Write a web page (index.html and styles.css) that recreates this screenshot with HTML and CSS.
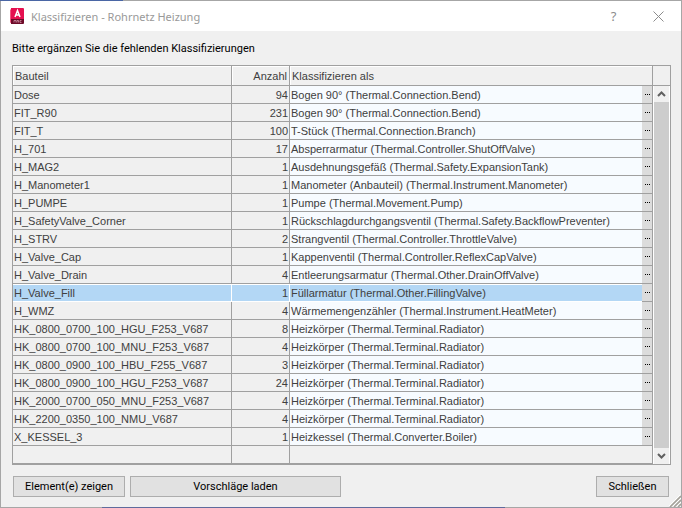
FILE: index.html
```html
<!DOCTYPE html>
<html lang="de">
<head>
  <meta charset="UTF-8" />
  <meta name="viewport" content="width=device-width, initial-scale=1.0"/>
  <title>Klassifizieren - Rohrnetz Heizung</title>
  <link rel="stylesheet" href="styles.css">
</head>
<body>
  <div class="dialog">
    <header class="titlebar">
      <svg class="app-icon" width="16" height="16" viewBox="0 0 16 16">
        <path d="M0 2 L2 0 V14 L0 15 Z" fill="#f0557f"/>
        <path d="M1 0 H13 Q14 0 14 1 V11 H1 Z" fill="#e51050"/>
        <path d="M1 11 H14 V15 Q14 16 13 16 H1 Z" fill="#6d0a28"/>
        <path d="M5 9 L7.5 2.5 L10 9 M5.8 7 H9.2" fill="none" stroke="#fff" stroke-width="1.5"/>
        <path d="M4 14.5 V12.5 H6 V14.5 M7 14.5 V12.5 H8.5 V14.5 M11.5 12.5 H10 V14.5 H11.5" fill="none" stroke="#d9a5b4" stroke-width="0.7"/>
      </svg>
      <h1>Klassifizieren - Rohrnetz Heizung</h1>
      <button class="title-btn" aria-label="Hilfe">?</button>
      <button class="title-btn" aria-label="Schließen">
        <svg width="11" height="11" viewBox="0 0 11 11"><path d="M0.5 0.5 L10.5 10.5 M10.5 0.5 L0.5 10.5" stroke="#8c8c8c" fill="none"/></svg>
      </button>
    </header>

    <main class="content">
      <p class="hint">Bitte ergänzen Sie die fehlenden Klassifizierungen</p>

      <div class="grid">
        <table>
          <thead>
            <tr><th class="part">Bauteil</th><th class="count">Anzahl</th><th class="class" colspan="2">Klassifizieren als</th></tr>
          </thead>
          <tbody>
            <tr><td>Dose</td><td>94</td><td>Bogen 90° (Thermal.Connection.Bend)</td><td><button aria-label="Auswählen"></button></td></tr>
            <tr><td>FIT_R90</td><td>231</td><td>Bogen 90° (Thermal.Connection.Bend)</td><td><button aria-label="Auswählen"></button></td></tr>
            <tr><td>FIT_T</td><td>100</td><td>T-Stück (Thermal.Connection.Branch)</td><td><button aria-label="Auswählen"></button></td></tr>
            <tr><td>H_701</td><td>17</td><td>Absperrarmatur (Thermal.Controller.ShutOffValve)</td><td><button aria-label="Auswählen"></button></td></tr>
            <tr><td>H_MAG2</td><td>1</td><td>Ausdehnungsgefäß (Thermal.Safety.ExpansionTank)</td><td><button aria-label="Auswählen"></button></td></tr>
            <tr><td>H_Manometer1</td><td>1</td><td>Manometer (Anbauteil) (Thermal.Instrument.Manometer)</td><td><button aria-label="Auswählen"></button></td></tr>
            <tr><td>H_PUMPE</td><td>1</td><td>Pumpe (Thermal.Movement.Pump)</td><td><button aria-label="Auswählen"></button></td></tr>
            <tr><td>H_SafetyValve_Corner</td><td>1</td><td>Rückschlagdurchgangsventil (Thermal.Safety.BackflowPreventer)</td><td><button aria-label="Auswählen"></button></td></tr>
            <tr><td>H_STRV</td><td>2</td><td>Strangventil (Thermal.Controller.ThrottleValve)</td><td><button aria-label="Auswählen"></button></td></tr>
            <tr><td>H_Valve_Cap</td><td>1</td><td>Kappenventil (Thermal.Controller.ReflexCapValve)</td><td><button aria-label="Auswählen"></button></td></tr>
            <tr><td>H_Valve_Drain</td><td>4</td><td>Entleerungsarmatur (Thermal.Other.DrainOffValve)</td><td><button aria-label="Auswählen"></button></td></tr>
            <tr class="selected"><td>H_Valve_Fill</td><td>1</td><td>Füllarmatur (Thermal.Other.FillingValve)</td><td><button aria-label="Auswählen"></button></td></tr>
            <tr><td>H_WMZ</td><td>4</td><td>Wärmemengenzähler (Thermal.Instrument.HeatMeter)</td><td><button aria-label="Auswählen"></button></td></tr>
            <tr><td>HK_0800_0700_100_HGU_F253_V687</td><td>8</td><td>Heizkörper (Thermal.Terminal.Radiator)</td><td><button aria-label="Auswählen"></button></td></tr>
            <tr><td>HK_0800_0700_100_MNU_F253_V687</td><td>4</td><td>Heizkörper (Thermal.Terminal.Radiator)</td><td><button aria-label="Auswählen"></button></td></tr>
            <tr><td>HK_0800_0900_100_HBU_F255_V687</td><td>3</td><td>Heizkörper (Thermal.Terminal.Radiator)</td><td><button aria-label="Auswählen"></button></td></tr>
            <tr><td>HK_0800_0900_100_HGU_F253_V687</td><td>24</td><td>Heizkörper (Thermal.Terminal.Radiator)</td><td><button aria-label="Auswählen"></button></td></tr>
            <tr><td>HK_2000_0700_050_MNU_F253_V687</td><td>4</td><td>Heizkörper (Thermal.Terminal.Radiator)</td><td><button aria-label="Auswählen"></button></td></tr>
            <tr><td>HK_2200_0350_100_NMU_V687</td><td>4</td><td>Heizkörper (Thermal.Terminal.Radiator)</td><td><button aria-label="Auswählen"></button></td></tr>
            <tr><td>X_KESSEL_3</td><td>1</td><td>Heizkessel (Thermal.Converter.Boiler)</td><td><button aria-label="Auswählen"></button></td></tr>
            <tr class="empty"><td></td><td></td><td colspan="2"></td></tr>
          </tbody>
        </table>
        <div class="scrollbar">
          <div class="corner"></div>
          <button aria-label="Nach oben"><svg width="9" height="6" viewBox="0 0 9 6"><path d="M1 5 L4.5 1.5 L8 5" fill="none" stroke="#606060" stroke-width="2"/></svg></button>
          <div class="thumb"></div>
          <button aria-label="Nach unten"><svg width="9" height="6" viewBox="0 0 9 6"><path d="M1 1 L4.5 4.5 L8 1" fill="none" stroke="#606060" stroke-width="2"/></svg></button>
        </div>
      </div>

      <footer class="actions">
        <button class="btn show">Element(e) zeigen</button>
        <button class="btn load">Vorschläge laden</button>
        <button class="btn close">Schließen</button>
      </footer>
    </main>

    <svg class="grip" width="12" height="12" viewBox="0 0 12 12">
      <path d="M1 12 L12 1 M5 12 L12 5 M9 12 L12 9" stroke="#a5a29a" stroke-width="1.6"/>
      <path d="M0 11 L11 0 M4 11 L12 3 M8 11 L12 7" stroke="#fff"/>
    </svg>
  </div>
</body>
</html>
```
FILE: styles.css
```css
* {
  box-sizing: border-box;
}

body {
  margin: 0;
  font-family: Roboto, sans-serif;
  font-size: 11px;
  color: #000;
}

button {
  font: inherit;
  color: inherit;
  padding: 0;
  border: none;
}

.dialog {
  position: relative;
  min-height: 100vh;
  display: flex;
  flex-direction: column;
  border: 1px solid transparent;
  background:
    linear-gradient(#f0f0f0, #f0f0f0) padding-box,
    linear-gradient(to right, #4a66a5 18%, #a6a6a6 18%) top / 100% 1px no-repeat border-box,
    linear-gradient(to right, #a6a6a6 15%, #5f6b9c 15% 74%, #a6a6a6 74%) bottom / 100% 1px no-repeat border-box,
    #a6a6a6 border-box;
}

.titlebar {
  display: flex;
  align-items: center;
  height: 30px;
  padding-left: 9px;
  background: #fff;
}

.titlebar h1 {
  flex: 1;
  margin: 0 0 0 5px;
  font-family: "Noto Sans", sans-serif;
  font-size: 11px;
  font-weight: normal;
  color: #999;
}

.title-btn {
  display: flex;
  align-items: center;
  justify-content: center;
  width: 45px;
  height: 30px;
  background: none;
  font-family: "Noto Sans", sans-serif;
  font-size: 13px;
  color: #8c8c8c;
}

.content {
  flex: 1;
  display: flex;
  flex-direction: column;
  padding: 10px 10px 10px 11px;
}

.hint {
  margin: 0 0 8px;
  line-height: 16px;
}

.grid {
  flex: 1;
  display: flex;
  border: 1px solid #a0a0a0;
  font-family: "Liberation Sans", Arial, sans-serif;
  font-size: 11px;
  color: #404040;
}

table {
  flex: 1;
  table-layout: fixed;
  border-collapse: separate;
  border-spacing: 0;
}

th,
td {
  height: 18px;
  padding: 0 1px;
  border-right: 1px solid #a0a0a0;
  border-bottom: 1px solid #a0a0a0;
  font-weight: normal;
  line-height: 16px;
  text-align: left;
  white-space: nowrap;
}

th {
  height: 20px;
  padding: 0 2px;
  box-shadow: inset 1px 1px #fff;
}

.part {
  width: 219px;
}

.count {
  width: 58px;
}

th:nth-child(2),
td:nth-child(2) {
  text-align: right;
}

td:nth-child(3) {
  background: #f7fbff;
  border-right: none;
}

td:nth-child(4) {
  width: 11px;
  padding: 0;
  background: #dcdcdc;
}

td button {
  display: flex;
  justify-content: center;
  align-items: center;
  width: 100%;
  height: 16px;
  background: none;
}

/* three dots of the picker button */
td button::before {
  content: "";
  width: 5px;
  height: 1px;
  background: repeating-linear-gradient(to right, #000 0 1px, transparent 1px 2px);
}

.selected td:not(:last-child) {
  background: #b3d7f5;
  border-color: #fff;
  box-shadow: inset 0 1px #fff;
}

.empty td,
.empty td:nth-child(3) {
  background: none;
  border-right: 1px solid #a0a0a0;
}

.scrollbar {
  display: flex;
  flex-direction: column;
  width: 17px;
  padding: 0 1px;
  background: #fff;
}

.corner {
  height: 20px;
  margin: 0 -1px;
  border-bottom: 1px solid #a0a0a0;
  background: #f0f0f0;
}

.scrollbar button {
  display: flex;
  justify-content: center;
  align-items: center;
  height: 16px;
  background: #f0f0f0;
}

.thumb {
  flex: 1;
  background: #cdcdcd;
}

.actions {
  display: flex;
  gap: 5px;
  margin-top: 11px;
  padding: 0 2px 0 1px;
}

.btn {
  height: 21px;
  background: #e1e1e1;
  border: 1px solid #adadad;
}

.show {
  width: 112px;
}

.load {
  width: 211px;
}

.close {
  width: 73px;
  margin-left: auto;
}

.grip {
  position: absolute;
  right: 0;
  bottom: 0;
}
```
